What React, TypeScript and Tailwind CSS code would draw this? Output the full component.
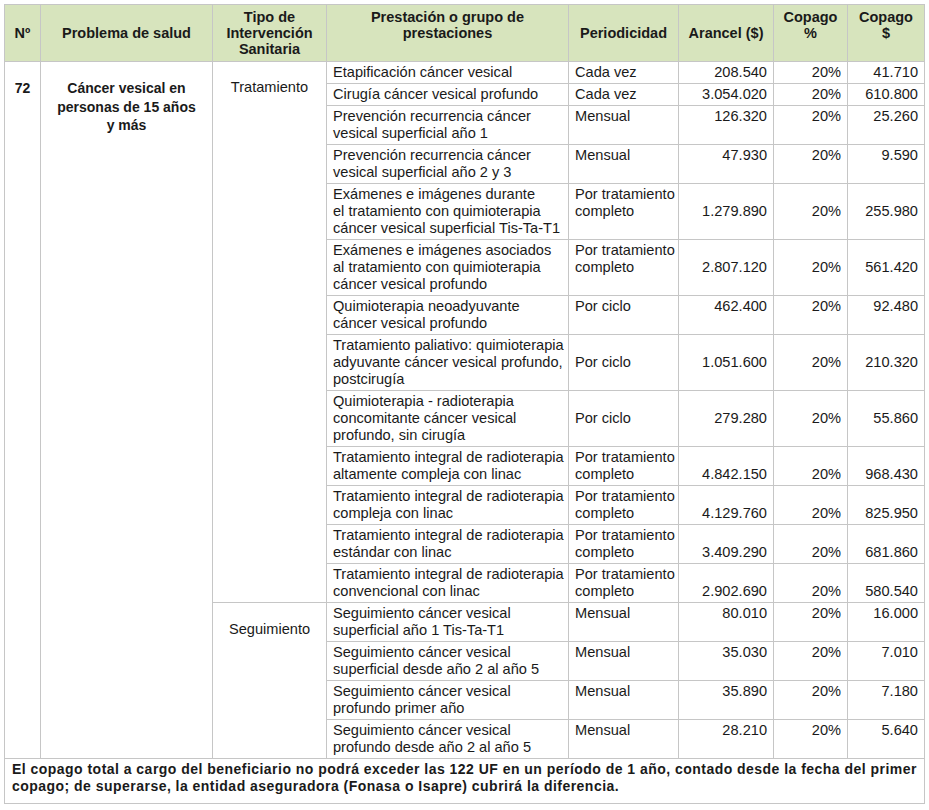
import type { ReactNode } from 'react';

type Align = 'top' | 'middle' | 'bottom';

interface Fila {
  prestacion: string[];
  periodicidad: string[];
  arancel: string;
  copago: string;
  alinPer?: Align;
  alinVal?: Align;
}

const filasTratamiento: Fila[] = [
  { prestacion: ['Etapificación cáncer vesical'], periodicidad: ['Cada vez'], arancel: '208.540', copago: '41.710' },
  { prestacion: ['Cirugía cáncer vesical profundo'], periodicidad: ['Cada vez'], arancel: '3.054.020', copago: '610.800' },
  { prestacion: ['Prevención recurrencia cáncer', 'vesical superficial año 1'], periodicidad: ['Mensual'], arancel: '126.320', copago: '25.260' },
  { prestacion: ['Prevención recurrencia cáncer', 'vesical superficial año 2 y 3'], periodicidad: ['Mensual'], arancel: '47.930', copago: '9.590' },
  {
    prestacion: ['Exámenes e imágenes durante', 'el tratamiento con quimioterapia', 'cáncer vesical superficial Tis-Ta-T1'],
    periodicidad: ['Por tratamiento', 'completo'], arancel: '1.279.890', copago: '255.980', alinVal: 'middle',
  },
  {
    prestacion: ['Exámenes e imágenes asociados', 'al tratamiento con quimioterapia', 'cáncer vesical profundo'],
    periodicidad: ['Por tratamiento', 'completo'], arancel: '2.807.120', copago: '561.420', alinVal: 'middle',
  },
  { prestacion: ['Quimioterapia neoadyuvante', 'cáncer vesical profundo'], periodicidad: ['Por ciclo'], arancel: '462.400', copago: '92.480' },
  {
    prestacion: ['Tratamiento paliativo: quimioterapia', 'adyuvante cáncer vesical profundo,', 'postcirugía'],
    periodicidad: ['Por ciclo'], arancel: '1.051.600', copago: '210.320', alinPer: 'middle', alinVal: 'middle',
  },
  {
    prestacion: ['Quimioterapia - radioterapia', 'concomitante cáncer vesical', 'profundo, sin cirugía'],
    periodicidad: ['Por ciclo'], arancel: '279.280', copago: '55.860', alinPer: 'middle', alinVal: 'middle',
  },
  {
    prestacion: ['Tratamiento integral de radioterapia', 'altamente compleja con linac'],
    periodicidad: ['Por tratamiento', 'completo'], arancel: '4.842.150', copago: '968.430', alinVal: 'bottom',
  },
  {
    prestacion: ['Tratamiento integral de radioterapia', 'compleja con linac'],
    periodicidad: ['Por tratamiento', 'completo'], arancel: '4.129.760', copago: '825.950', alinVal: 'bottom',
  },
  {
    prestacion: ['Tratamiento integral de radioterapia', 'estándar con linac'],
    periodicidad: ['Por tratamiento', 'completo'], arancel: '3.409.290', copago: '681.860', alinVal: 'bottom',
  },
  {
    prestacion: ['Tratamiento integral de radioterapia', 'convencional con linac'],
    periodicidad: ['Por tratamiento', 'completo'], arancel: '2.902.690', copago: '580.540', alinVal: 'bottom',
  },
];

const filasSeguimiento: Fila[] = [
  { prestacion: ['Seguimiento cáncer vesical', 'superficial año 1 Tis-Ta-T1'], periodicidad: ['Mensual'], arancel: '80.010', copago: '16.000' },
  { prestacion: ['Seguimiento cáncer vesical', 'superficial desde año 2 al año 5'], periodicidad: ['Mensual'], arancel: '35.030', copago: '7.010' },
  { prestacion: ['Seguimiento cáncer vesical', 'profundo primer año'], periodicidad: ['Mensual'], arancel: '35.890', copago: '7.180' },
  { prestacion: ['Seguimiento cáncer vesical', 'profundo desde año 2 al año 5'], periodicidad: ['Mensual'], arancel: '28.210', copago: '5.640' },
];

const valign: Record<Align, string> = {
  top: 'align-top',
  middle: 'align-middle',
  bottom: 'align-bottom',
};

const celda = 'border border-[#c6c6c6] pl-[6px] pr-[6px] pt-[2px] pb-[2px] leading-[17px] text-[14.6px] whitespace-nowrap';
const cabecera = 'border border-[#c6c6c6] bg-[#d7e4bd] px-1 py-1 leading-[16px] text-[14.5px] font-bold text-center whitespace-nowrap';

function Lineas({ lineas }: { lineas: string[] }) {
  const out: ReactNode[] = [];
  lineas.forEach((l, i) => {
    if (i > 0) out.push(<br key={`br${i}`} />);
    out.push(l);
  });
  return <>{out}</>;
}

function FilaCuerpo({ f, children }: { f: Fila; children?: ReactNode }) {
  const per = valign[f.alinPer ?? 'top'];
  const val = valign[f.alinVal ?? 'top'];
  return (
    <tr>
      {children}
      <td className={`${celda} align-top`}>
        <Lineas lineas={f.prestacion} />
      </td>
      <td className={`${celda} ${per}`}>
        <Lineas lineas={f.periodicidad} />
      </td>
      <td className={`${celda} ${val} text-right`}>{f.arancel}</td>
      <td className={`${celda} ${val} text-right`}>20%</td>
      <td className={`${celda} ${val} text-right`}>{f.copago}</td>
    </tr>
  );
}

export default function App() {
  const total = filasTratamiento.length + filasSeguimiento.length;
  return (
    <div className="min-h-[810px] bg-white pt-[4px] pl-[4px] text-[#1a1a1a] text-[14px] font-['Liberation_Sans',Arial,sans-serif]">
      <table className="table-fixed border-collapse w-[920px]">
        <colgroup>
          <col className="w-[36px]" />
          <col className="w-[172px]" />
          <col className="w-[114px]" />
          <col className="w-[242px]" />
          <col className="w-[110px]" />
          <col className="w-[95px]" />
          <col className="w-[74px]" />
          <col className="w-[77px]" />
        </colgroup>
        <thead>
          <tr>
            <th className={`${cabecera} align-middle`}>Nº</th>
            <th className={`${cabecera} align-middle`}>Problema de salud</th>
            <th className={`${cabecera} align-middle`}>
              Tipo de
              <br />
              Intervención
              <br />
              Sanitaria
            </th>
            <th className={`${cabecera} align-top`}>
              Prestación o grupo de
              <br />
              prestaciones
            </th>
            <th className={`${cabecera} align-middle`}>Periodicidad</th>
            <th className={`${cabecera} align-middle`}>Arancel ($)</th>
            <th className={`${cabecera} align-top`}>
              Copago
              <br />%
            </th>
            <th className={`${cabecera} align-top`}>
              Copago
              <br />$
            </th>
          </tr>
        </thead>
        <tbody>
          {filasTratamiento.map((f, i) => (
            <FilaCuerpo key={`t${i}`} f={f}>
              {i === 0 && (
                <>
                  <td rowSpan={total} className="border border-[#c6c6c6] align-top text-center font-bold pt-[17px] leading-[18px]">
                    72
                  </td>
                  <td rowSpan={total} className="border border-[#c6c6c6] align-top text-center font-bold px-2 pt-[17px] leading-[18.5px] whitespace-nowrap">
                    Cáncer vesical en
                    <br />
                    personas de 15 años
                    <br />y más
                  </td>
                  <td rowSpan={filasTratamiento.length} className="border border-[#c6c6c6] align-top text-center pt-[17px] leading-[17px] text-[14.6px]">
                    Tratamiento
                  </td>
                </>
              )}
            </FilaCuerpo>
          ))}
          {filasSeguimiento.map((f, i) => (
            <FilaCuerpo key={`s${i}`} f={f}>
              {i === 0 && (
                <td rowSpan={filasSeguimiento.length} className="border border-[#c6c6c6] align-top text-center pt-[18px] leading-[17px] text-[14.6px]">
                  Seguimiento
                </td>
              )}
            </FilaCuerpo>
          ))}
          <tr>
            <td colSpan={8} className="border border-[#c6c6c6] px-[7px] pt-[2px] pb-[8px] leading-[17px] font-bold tracking-[0.47px] text-[14px] whitespace-nowrap">
              El copago total a cargo del beneficiario no podrá exceder las 122 UF en un período de 1 año, contado desde la fecha del primer
              <br />
              copago; de superarse, la entidad aseguradora (Fonasa o Isapre) cubrirá la diferencia.
            </td>
          </tr>
        </tbody>
      </table>
    </div>
  );
}
